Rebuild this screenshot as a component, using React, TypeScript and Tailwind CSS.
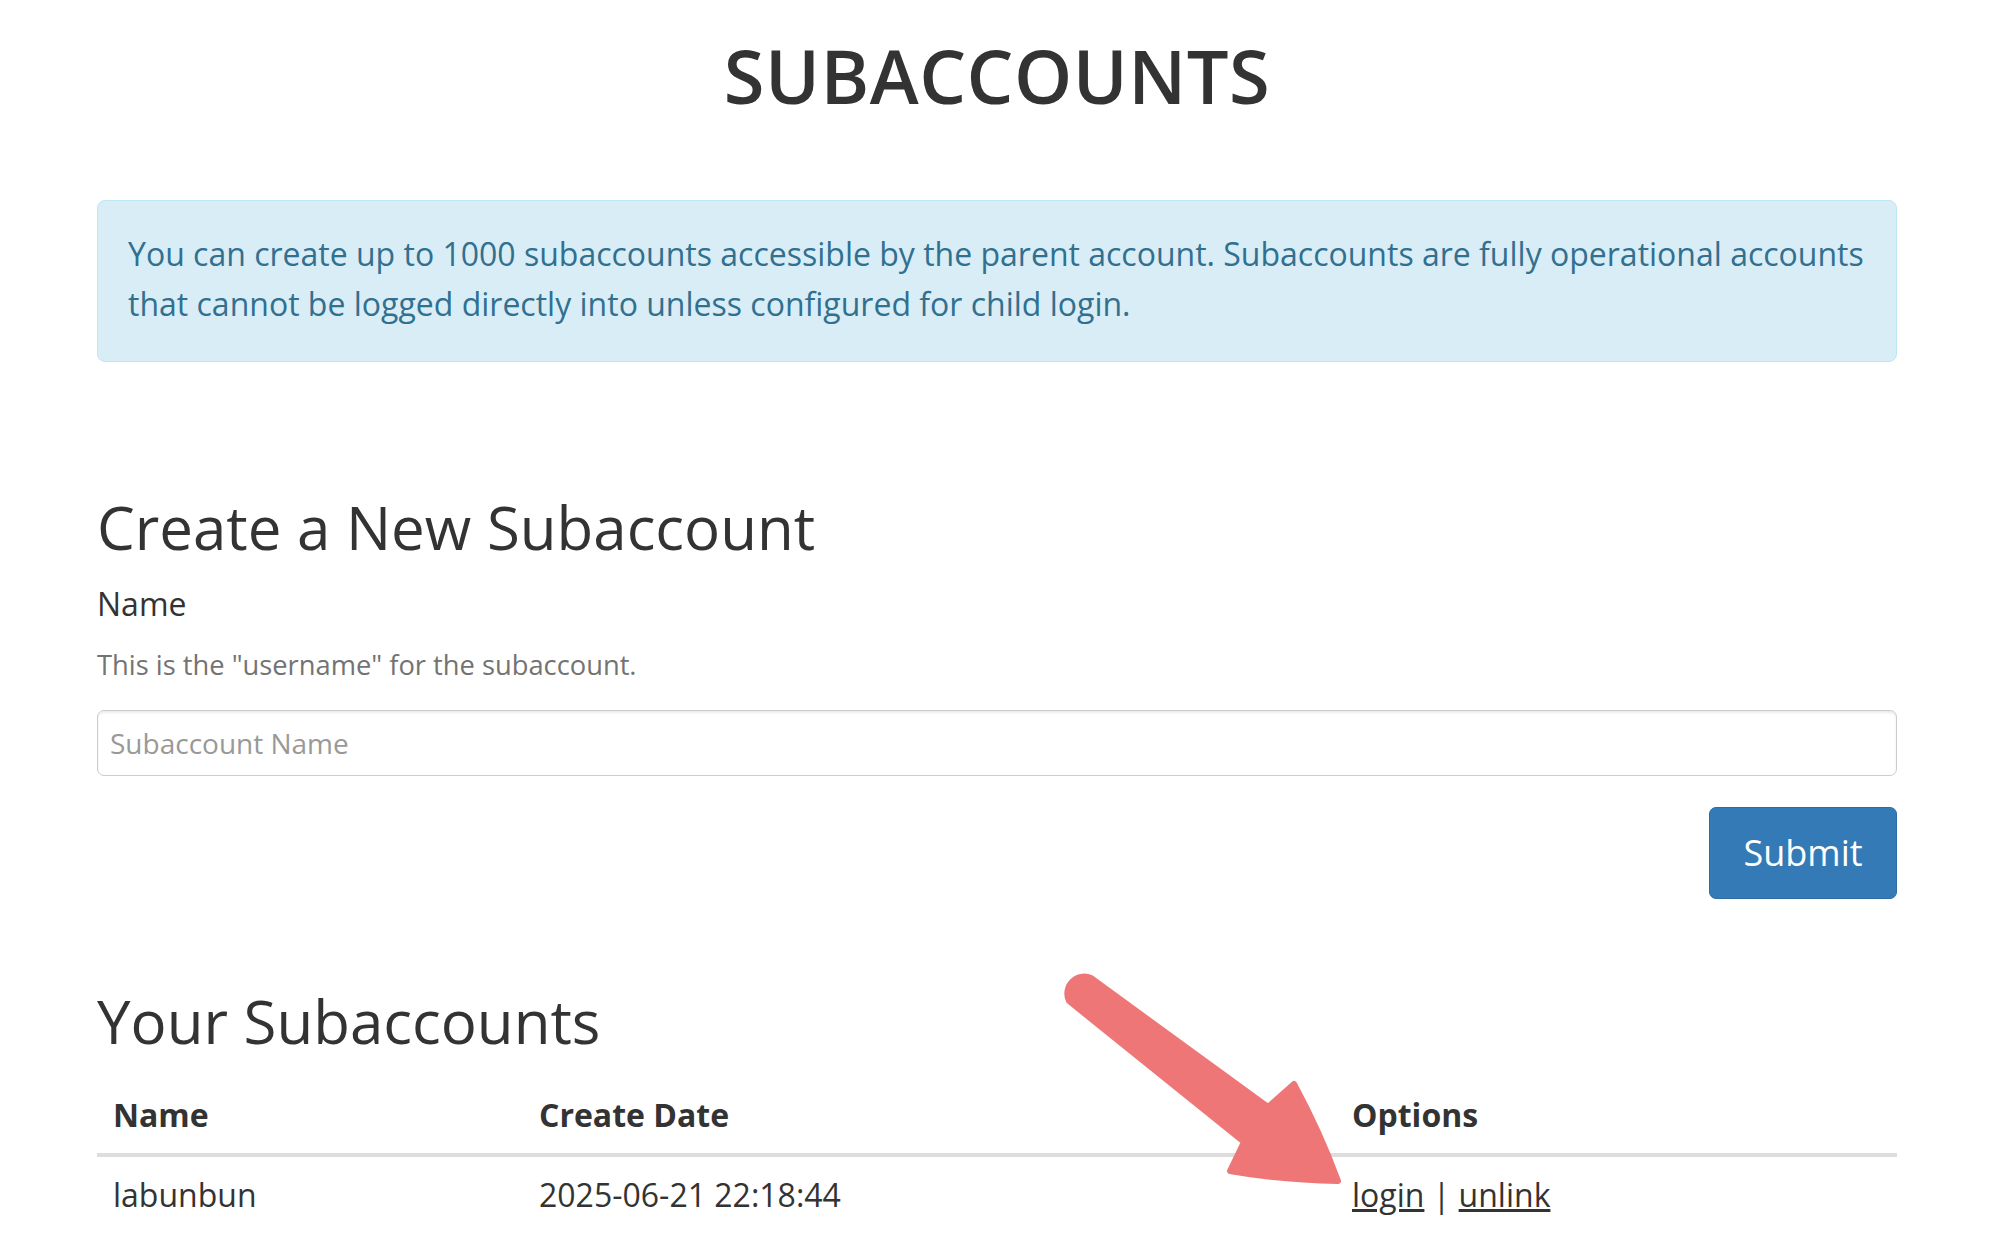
import React from "react";

export default function App() {
  return (
    <div className="relative min-h-[1258px] w-full bg-white font-['Open_Sans',sans-serif] text-[#333]">
      <div className="mx-auto w-[1800px] pt-[36px]">
        <h1 className="text-center text-[74px] font-semibold leading-[80px] tracking-[0.5px] text-[#333]">
          SUBACCOUNTS
        </h1>

        <div className="mt-[84px] rounded-[8px] border border-[#bce8f1] bg-[#d9edf7] pb-[32px] pl-[30px] pr-[10px] pt-[28px] text-[32px] leading-[50px] text-[#31708f]">
          You can create up to 1000 subaccounts accessible by the parent account. Subaccounts are fully operational accounts
          that cannot be logged directly into unless configured for child login.
        </div>

        <h2 className="mt-[132px] text-[60px] font-normal leading-[66px] text-[#333]">
          Create a New Subaccount
        </h2>
        <label className="mt-[22px] block text-[32px] leading-[43px] text-[#333]">Name</label>
        <p className="mt-[20px] text-[27.3px] leading-[39px] text-[#737373]">
          This is the "username" for the subaccount.
        </p>
        <input
          type="text"
          placeholder="Subaccount Name"
          className="mt-[26px] block h-[66px] w-full rounded-[7px] border border-[#ccc] bg-white px-[12px] font-['Open_Sans',sans-serif] text-[28px] text-[#555] shadow-[inset_0_2px_2px_rgba(0,0,0,0.075)] outline-none placeholder:text-[#999]"
        />
        <div className="mt-[31px] flex justify-end">
          <button className="h-[92px] w-[188px] rounded-[7px] border border-[#2e6da4] bg-[#337ab7] text-[36px] leading-[48px] text-white">
            Submit
          </button>
        </div>

        <h2 className="mt-[89px] text-[60px] font-normal leading-[66px] text-[#333]">
          Your Subaccounts
        </h2>
        <table className="mt-[20px] w-full border-collapse text-[32px] leading-[46px] text-[#333]">
          <thead>
            <tr className="border-b-4 border-[#ddd]">
              <th className="w-[426px] px-[16px] pb-[15px] pt-[18px] text-left font-bold">Name</th>
              <th className="w-[813px] px-[16px] pb-[15px] pt-[18px] text-left font-bold">Create Date</th>
              <th className="px-[16px] pb-[15px] pt-[18px] text-left font-bold">Options</th>
            </tr>
          </thead>
          <tbody>
            <tr>
              <td className="px-[16px] pb-[18px] pt-[15px]">labunbun</td>
              <td className="px-[16px] pb-[18px] pt-[15px]">2025-06-21 22:18:44</td>
              <td className="px-[16px] pb-[18px] pt-[15px]">
                <a href="#" className="text-[#333] underline">login</a>
                {" | "}
                <a href="#" className="text-[#333] underline">unlink</a>
              </td>
            </tr>
          </tbody>
        </table>
      </div>

      <svg
        className="pointer-events-none absolute left-0 top-0"
        width="1994"
        height="1258"
        viewBox="0 0 1994 1258"
      >
        <path
          d="M 1069 1001 A 17 17 0 0 1 1091 978 L 1268 1107 L 1294 1084 Q 1320 1132 1338 1181 Q 1280 1180 1230 1171 L 1244 1142 Z"
          fill="#ef7676"
          stroke="#ef7676"
          strokeWidth="6"
          strokeLinejoin="round"
        />
      </svg>
    </div>
  );
}
